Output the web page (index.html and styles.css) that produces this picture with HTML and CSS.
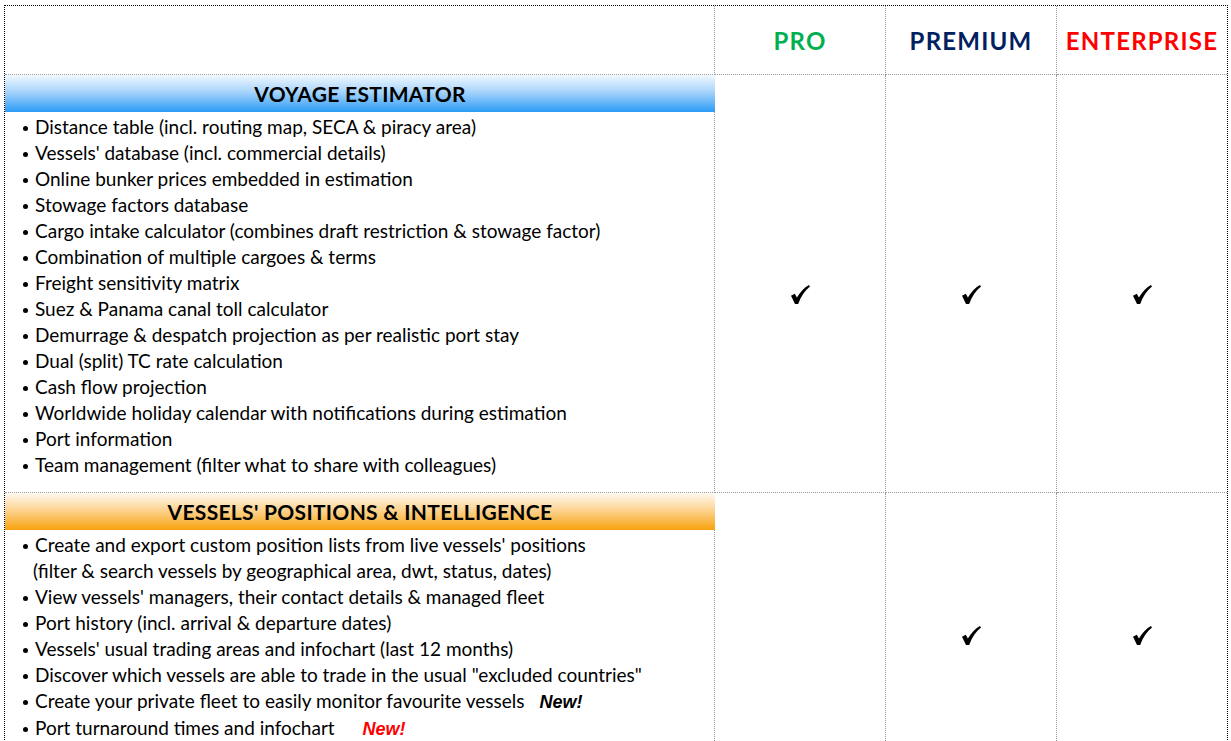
FILE: index.html
```html
<!DOCTYPE html>
<html>
<head>
<meta charset="utf-8">
<link rel="stylesheet" href="styles.css">
</head>
<body>
<div class="sheet">
  <div class="cell head-blank"></div>
  <div class="cell plan pro">PRO</div>
  <div class="cell plan premium">PREMIUM</div>
  <div class="cell plan enterprise last">ENTERPRISE</div>

  <div class="cell feature">
    <div class="band blue">VOYAGE ESTIMATOR</div>
    <ul class="items">
      <li>Distance table (incl. routing map, SECA &amp; piracy area)</li>
      <li>Vessels' database (incl. commercial details)</li>
      <li>Online bunker prices embedded in estimation</li>
      <li>Stowage factors database</li>
      <li>Cargo intake calculator (combines draft restriction &amp; stowage factor)</li>
      <li>Combination of multiple cargoes &amp; terms</li>
      <li>Freight sensitivity matrix</li>
      <li>Suez &amp; Panama canal toll calculator</li>
      <li>Demurrage &amp; despatch projection as per realistic port stay</li>
      <li>Dual (split) TC rate calculation</li>
      <li>Cash flow projection</li>
      <li>Worldwide holiday calendar with notifications during estimation</li>
      <li>Port information</li>
      <li>Team management (filter what to share with colleagues)</li>
    </ul>
  </div>
  <div class="cell check"><svg class="tick" viewBox="0 0 18 18"><path d="M0 10.2 L3.6 8.2 L5.6 11.8 C8.6 6.8 12.4 2.6 17 0 L18 1.4 C13.4 5.2 9.4 10.6 6.8 18 L3.8 18 Z"/></svg></div>
  <div class="cell check"><svg class="tick" viewBox="0 0 18 18"><path d="M0 10.2 L3.6 8.2 L5.6 11.8 C8.6 6.8 12.4 2.6 17 0 L18 1.4 C13.4 5.2 9.4 10.6 6.8 18 L3.8 18 Z"/></svg></div>
  <div class="cell check last"><svg class="tick" viewBox="0 0 18 18"><path d="M0 10.2 L3.6 8.2 L5.6 11.8 C8.6 6.8 12.4 2.6 17 0 L18 1.4 C13.4 5.2 9.4 10.6 6.8 18 L3.8 18 Z"/></svg></div>

  <div class="cell feature">
    <div class="band orange">VESSELS' POSITIONS &amp; INTELLIGENCE</div>
    <ul class="items">
      <li>Create and export custom position lists from live vessels' positions<br><span class="cont">(filter &amp; search vessels by geographical area, dwt, status, dates)</span></li>
      <li>View vessels' managers, their contact details &amp; managed fleet</li>
      <li>Port history (incl. arrival &amp; departure dates)</li>
      <li>Vessels' usual trading areas and infochart (last 12 months)</li>
      <li>Discover which vessels are able to trade in the usual "excluded countries"</li>
      <li>Create your private fleet to easily monitor favourite vessels <span class="new">New!</span></li>
      <li>Port turnaround times and infochart <span class="new red">New!</span></li>
    </ul>
  </div>
  <div class="cell check empty"></div>
  <div class="cell check"><svg class="tick" viewBox="0 0 18 18"><path d="M0 10.2 L3.6 8.2 L5.6 11.8 C8.6 6.8 12.4 2.6 17 0 L18 1.4 C13.4 5.2 9.4 10.6 6.8 18 L3.8 18 Z"/></svg></div>
  <div class="cell check last"><svg class="tick" viewBox="0 0 18 18"><path d="M0 10.2 L3.6 8.2 L5.6 11.8 C8.6 6.8 12.4 2.6 17 0 L18 1.4 C13.4 5.2 9.4 10.6 6.8 18 L3.8 18 Z"/></svg></div>
</div>
</body>
</html>
```
FILE: styles.css
```css
html, body {
  margin: 0;
  padding: 0;
  background: #fff;
  overflow: hidden;
}
body {
  font-family: "Lato", "Open Sans", sans-serif;
  color: #000;
}
.sheet {
  margin: 5px 0 0 4px;
  width: 1222px;
  border: 1px dotted #000;
  display: grid;
  grid-template-columns: 710px 171px 171px 170px;
  grid-template-rows: 69px 418px 264px;
}
.cell {
  box-sizing: border-box;
  border-right: 1px dotted #9a9a9a;
  border-bottom: 1px dotted #9a9a9a;
}
.cell.last {
  border-right: none;
}
.plan {
  display: flex;
  align-items: center;
  justify-content: center;
  font-weight: 700;
  font-size: 24px;
  letter-spacing: 1.2px;
}
.pro { color: #00b050; }
.premium { color: #002060; }
.enterprise { color: #ff0000; }
.band {
  height: 37px;
  margin-right: -1px;
  display: flex;
  align-items: center;
  justify-content: center;
  font-weight: 700;
  font-size: 21px;
  letter-spacing: 0.3px;
}
.band.blue {
  background: linear-gradient(to bottom, #f2f9ff 0%, #a8d4fb 45%, #2b9cf6 100%);
}
.band.orange {
  background: linear-gradient(to bottom, #fffaf2 0%, #fcd088 50%, #f7a30c 100%);
}
.items {
  list-style: none;
  margin: 0;
  padding: 2px 0 0 16px;
  font-size: 19px;
  line-height: 26px;
}
.items li {
  position: relative;
  padding-left: 14px;
  white-space: nowrap;
}
.items li::before {
  content: "";
  position: absolute;
  left: 2px;
  top: 12px;
  width: 5px;
  height: 5px;
  border-radius: 50%;
  background: #000;
}
.cont {
  margin-left: -2px;
}
.new {
  font-family: "Liberation Sans", Arial, sans-serif;
  font-weight: 700;
  font-style: italic;
  font-size: 18px;
  margin-left: 10px;
}
.new.red {
  color: #ff0000;
  margin-left: 23px;
}
.check {
  display: flex;
  align-items: center;
  justify-content: center;
  padding-top: 22px;
}
.tick {
  width: 19px;
  height: 19px;
  fill: #000;
}
```
